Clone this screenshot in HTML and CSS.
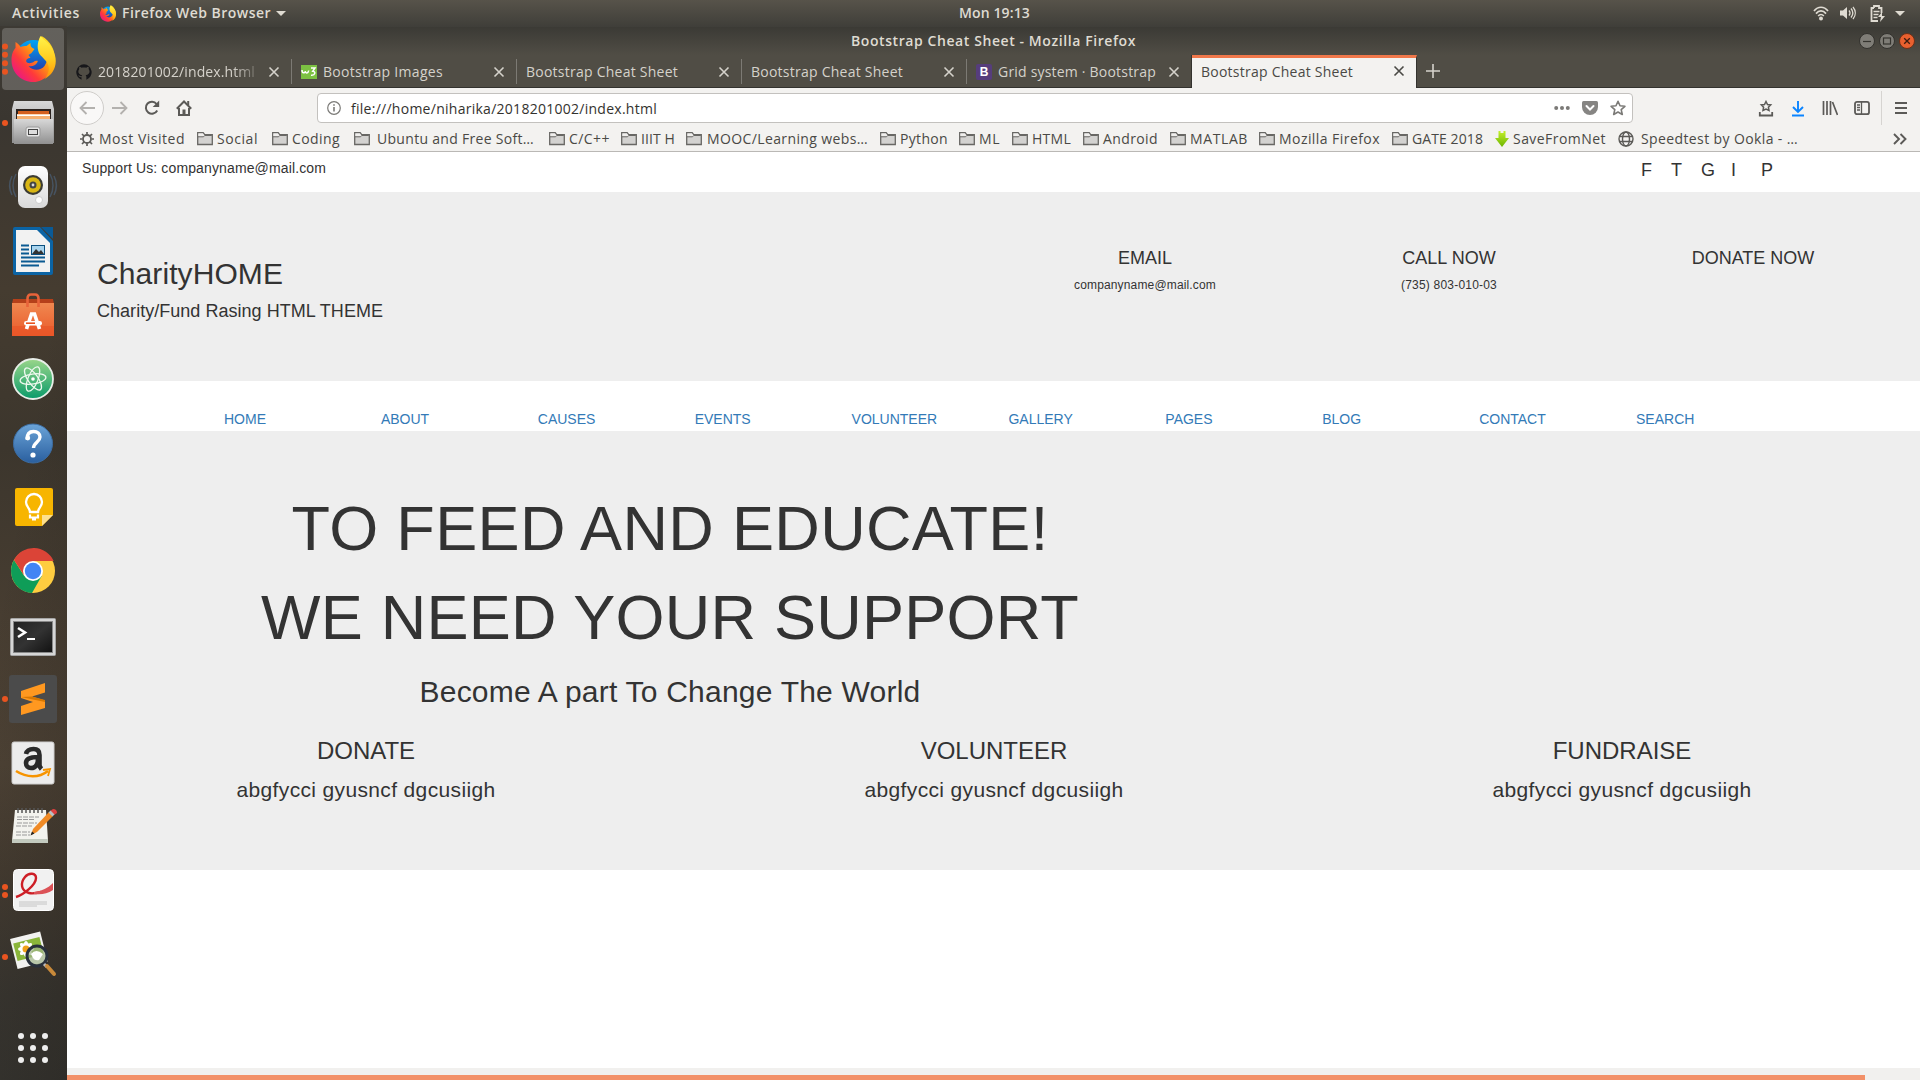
FILE: index.html
```html
<!DOCTYPE html>
<html lang="en">
<head>
<meta charset="utf-8">
<title>Bootstrap Cheat Sheet</title>
<link rel="stylesheet" href="styles.css">
</head>
<body>
<svg class="defs" width="0" height="0" aria-hidden="true">
  <defs>
    <linearGradient id="fxBody" x1="0.9" y1="0.1" x2="0.1" y2="0.9"><stop offset="0" stop-color="#ffe226"/><stop offset=".4" stop-color="#ff9a10"/><stop offset=".7" stop-color="#ff3a3a"/><stop offset="1" stop-color="#e8158a"/></linearGradient>
    <linearGradient id="fxBlue" x1="0" y1="0" x2="0" y2="1"><stop offset="0" stop-color="#00a5f5"/><stop offset="1" stop-color="#2b2ca0"/></linearGradient>
    <linearGradient id="fxFlame" x1="0" y1="0" x2="0" y2="1"><stop offset="0" stop-color="#fff44a"/><stop offset=".55" stop-color="#ffcb1e"/><stop offset="1" stop-color="#ff9108"/></linearGradient>
    <linearGradient id="silver" x1="0" y1="0" x2="0" y2="1"><stop offset="0" stop-color="#d8d8d8"/><stop offset="1" stop-color="#909090"/></linearGradient>
    <linearGradient id="paper" x1="0" y1="0" x2="0" y2="1"><stop offset="0" stop-color="#fff"/><stop offset="1" stop-color="#d9d9d9"/></linearGradient>
    <linearGradient id="bag" x1="0" y1="0" x2="0" y2="1"><stop offset="0" stop-color="#f08850"/><stop offset="1" stop-color="#ea5a2a"/></linearGradient>
    <linearGradient id="green" x1="0" y1="0" x2="0" y2="1"><stop offset="0" stop-color="#9ad68a"/><stop offset="1" stop-color="#0a9b6a"/></linearGradient>
    <linearGradient id="blue" x1="0" y1="0" x2="0" y2="1"><stop offset="0" stop-color="#6ba4d8"/><stop offset="1" stop-color="#2a5f9f"/></linearGradient>
    <linearGradient id="dark" x1="0" y1="0" x2="1" y2="1"><stop offset="0" stop-color="#222"/><stop offset=".5" stop-color="#333"/><stop offset="1" stop-color="#111"/></linearGradient>
    <linearGradient id="lime" x1="0" y1="0" x2="0" y2="1"><stop offset="0" stop-color="#c4f02a"/><stop offset="1" stop-color="#6cb400"/></linearGradient>
    <symbol id="firefox" viewBox="0 0 44 46">
      <circle cx="22" cy="22" r="18" fill="url(#fxBlue)"/>
      <path d="M4 6c2 1 4 3 5 5 2-1 4-1 6-1l4-3c0 2 0 4 2 5l2 1-3 4-3 2 2 3c-3 0-5 2-4 4 2 2 5 1 7 0 3-2 5-1 4 0-2 4-6 5-9 4 4 5 12 5 16 0 4-6 3-10 0-14-6-5-5-11-3-16 9 5 14 14 13 24-1 12-10 22-21 22C9 46 0 36 0 24 0 18 2 14 4 12z" fill="url(#fxBody)"/>
      <path d="M29 0c3 4 9 7 12 13 7 13 2 25-8 30 4-5 5-9 4-13-1-5-6-8-9-12-3-6-2-12 1-18z" fill="url(#fxFlame)"/>
    </symbol>
    <symbol id="x" viewBox="0 0 12 12"><path d="M1.500 1.500l9 9M10.500 1.500l-9 9" stroke="currentColor" stroke-width="1.600" fill="none"/></symbol>
    <symbol id="folder" viewBox="0 0 16 16"><path d="M.7 13.500V1.700h5.500l1.500 2h7.600v9.800z" fill="#d3d2d0" stroke="#686764" stroke-width="1.300"/><path d="M1.400 2.400h4.500l1.400 2-1 .9H1.400z" fill="#f0efed"/><path d="M1 5.800h5.500l1.300-1.300h7" fill="none" stroke="#686764"/></symbol>
    <symbol id="star" viewBox="0 0 16 16"><path d="M8 1.300l2 4.500 4.900.5-3.700 3.300 1.100 4.900L8 12l-4.300 2.500 1.100-4.900L1.100 6.300 6 5.800z" fill="none" stroke="currentColor" stroke-width="1.600" stroke-linejoin="round"/></symbol>
  </defs>
</svg>

<header class="panel">
  <span class="p-act" data-w="68">Activities</span>
  <svg class="p-fx" width="16" height="17"><use href="#firefox"/></svg>
  <span class="p-app" data-w="149">Firefox Web Browser</span>
  <i class="caret"></i>
  <span class="p-clock" data-w="71">Mon 19:13</span>
  <div class="p-tray">
    <svg width="16" height="16" viewBox="0 0 16 16"><g fill="none" stroke="#dfdbd2" stroke-width="1.700"><path d="M1 6c4-5 10-5 14 0M3 8.600c3-3.600 7-3.600 10 0M5.200 11c1.700-2 3.900-2 5.600 0"/></g><circle cx="8" cy="13.500" r="2" fill="#dfdbd2"/></svg>
    <svg width="16" height="16" viewBox="0 0 16 16"><path d="M0 5.500h3L7 2v12L3 10.500H0z" fill="#dfdbd2"/><path d="M9 5.500c1.200 1.500 1.200 3.500 0 5M11 3.500c2.200 2.700 2.200 6.300 0 9M13 2c3 3.600 3 8.400 0 12" fill="none" stroke="#dfdbd2" stroke-width="1.300"/></svg>
    <svg width="16" height="17" viewBox="0 0 16 17"><path d="M4 3V1h5v2h2.500v5M8 16H1.500V3H4" fill="none" stroke="#dfdbd2" stroke-width="1.800"/><path d="M3.500 6.500h6M3.500 9.500h5M3.500 12.500h4" stroke="#dfdbd2" stroke-width="1.500"/><path d="M12 7l-4 5h3l-1 5 5-6h-3z" fill="#dfdbd2"/></svg>
    <i class="caret"></i>
  </div>
</header>

<div class="desktop">
<nav class="dock">
  <div class="app current"><svg width="67" height="64" viewBox="0 0 67 64">
    <rect x="2" y="2" width="62" height="62" rx="4" fill="#fff" opacity=".2"/>
    <use href="#firefox" x="11" y="10" width="45" height="46"/>
    <g fill="#e95420"><circle cx="5" cy="20.500" r="3"/><circle cx="5" cy="28.700" r="3"/><circle cx="5" cy="37.200" r="3"/><circle cx="5" cy="45.700" r="3"/></g></svg></div>
  <div class="app"><svg width="67" height="64" viewBox="0 0 67 64">
    <path d="M14 11h38l2 8v34H12V19z" fill="url(#silver)"/><path d="M16 19h35v11H16z" fill="#2b2320"/><path d="M18 21h31v10H18z" fill="#d4601e"/><path d="M17 24h33v6H17z" fill="#f5b070"/><path d="M17 24.500h33v1.500H17z" fill="#fff"/>
    <path d="M14 29h39v25H14z" fill="url(#silver)"/><rect x="26" y="37" width="14" height="10" rx="2" fill="#e6e6e6" stroke="#999"/><rect x="28.500" y="39.500" width="9" height="5" fill="#ddd" stroke="#444"/><circle cx="5" cy="33" r="3" fill="#e95420"/></svg></div>
  <div class="app"><svg width="67" height="64" viewBox="0 0 67 64">
    <g fill="none" stroke="#4c6682" stroke-width="1.500" opacity=".6"><path d="M16 20c-4 7-4 16 0 23M12 22c-3 6-3 13 0 19M50 20c4 7 4 16 0 23M54 22c3 6 3 13 0 19"/></g>
    <rect x="18" y="12" width="30" height="42" rx="7" fill="url(#paper)"/><circle cx="33" cy="31" r="10" fill="#3b3b33"/><circle cx="33" cy="31" r="7.800" fill="#d9b614"/><circle cx="33" cy="31" r="3.500" fill="#444"/><circle cx="33" cy="31" r="1.400" fill="#ddd"/><circle cx="39" cy="46" r="3.500" fill="#fff" stroke="#ccc"/></svg></div>
  <div class="app"><svg width="67" height="64" viewBox="0 0 67 64">
    <path d="M13 11q0-2 2-2h25l13 14v32q0 2-2 2H15q-2 0-2-2z" fill="#0b64a5"/><path d="M16 12h21l13 13v29H16z" fill="#f2f2f2"/><path d="M41 9h12v12z" fill="#0a5a96"/>
    <path d="M21 27.500h8M21 31.500h8M21 35.500h8M21 39.500h24M21 43.500h24M21 47.500h18" stroke="#0b5a92" stroke-width="2"/><rect x="31.500" y="27.500" width="13" height="9" fill="#a9d4ee" stroke="#0b4f7f"/><path d="M32 36l4-5 3 3 2-2 3 4z" fill="#333"/></svg></div>
  <div class="app"><svg width="67" height="64" viewBox="0 0 67 64">
    <path d="M13 17h40l1 5H12z" fill="#b5401a"/><path d="M12 21h42v33H12z" fill="url(#bag)"/><path d="M12 44h42v10H12z" fill="#ea5426" opacity=".6"/><path d="M27.500 25v-8q0-4.500 3.500-4.500h4q3.500 0 3.500 4.500v8" fill="none" stroke="#e8633a" stroke-width="2.600"/>
    <path d="M26.500 47l5-15h3l5 15" fill="none" stroke="#fff" stroke-width="3.600"/><rect x="24" y="39" width="18" height="4.500" rx="2.200" fill="#fff"/><path d="M26 41.200h9" stroke="#e95420" stroke-width="1.600"/></svg></div>
  <div class="app"><svg width="67" height="64" viewBox="0 0 67 64">
    <circle cx="33" cy="33" r="20" fill="url(#green)" stroke="#e8eee8" stroke-width="1.800"/><g fill="none" stroke="#eef8ee" stroke-width="1.300"><ellipse cx="33" cy="33" rx="13" ry="5" transform="rotate(-8 33 33)"/><ellipse cx="33" cy="33" rx="13" ry="5" transform="rotate(55 33 33)"/><ellipse cx="33" cy="33" rx="13" ry="5" transform="rotate(112 33 33)"/></g><circle cx="33" cy="33" r="1.800" fill="#fff"/></svg></div>
  <div class="app"><svg width="67" height="64" viewBox="0 0 67 64">
    <circle cx="33" cy="33.500" r="19.500" fill="url(#blue)" stroke="#3c6ea5"/><path d="M27 29.500c0-6 3-8 6.500-8 4 0 6.500 2.300 6.500 5.500 0 5-6.500 5.500-6.500 11" fill="none" stroke="#fff" stroke-width="3.400"/><circle cx="27.800" cy="28" r="2.400" fill="#fff"/><circle cx="33" cy="45" r="2.600" fill="#fff"/></svg></div>
  <div class="app"><svg width="67" height="64" viewBox="0 0 67 64">
    <path d="M15 16q0-2 2-2h34q2 0 2 2v25L42 52H17q-2 0-2-2z" fill="#f7b500"/><path d="M53 41L42 52V41z" fill="#fde08e"/><path d="M30 38c0-4-4-5-4-10a8 8 0 0 1 16 0c0 5-4 6-4 10z" fill="none" stroke="#fff" stroke-width="2.300"/><path d="M30 40.500v3h8v-3M32 45.500h4" fill="none" stroke="#fff" stroke-width="2.200"/></svg></div>
  <div class="app"><svg width="67" height="64" viewBox="0 0 67 64">
    <circle cx="33" cy="33" r="22" fill="#ffcd40"/><path d="M14 22A22 22 0 0 0 32 55l9.700-17L33 33l-8.700 5z" fill="#0f9d58"/><path d="M14 22A22 22 0 0 1 53.700 23H33l-8.600 15z" fill="#db4437"/><circle cx="33" cy="33" r="10" fill="#fff"/><circle cx="33" cy="33" r="8.200" fill="#4285f4"/></svg></div>
  <div class="app"><svg width="67" height="64" viewBox="0 0 67 64">
    <rect x="10.500" y="16.500" width="45" height="37" rx="1" fill="#d6d6d6" stroke="#a5a5a5"/><rect x="13.500" y="19.500" width="39" height="31" fill="url(#dark)" stroke="#888"/><path d="M18 26l7 4.500-7 4.500" fill="none" stroke="#fff" stroke-width="2.600"/><path d="M27 37h8" stroke="#fff" stroke-width="2"/></svg></div>
  <div class="app"><svg width="67" height="64" viewBox="0 0 67 64">
    <rect x="9" y="9" width="48" height="48" rx="3" fill="#4b4b4b"/><path d="M21 25l24-8v9.500l-13 4 13 4V42l-24 7v-9l12-4-12-4z" fill="#ff9820"/><path d="M21 31l24 5v-2l-13-3.500z" fill="#d97800"/><circle cx="5" cy="33" r="3" fill="#e95420"/></svg></div>
  <div class="app"><svg width="67" height="64" viewBox="0 0 67 64">
    <rect x="12" y="12" width="42" height="42" rx="2" fill="#ececec" stroke="#cfcfcf"/><path d="M26 24c1-4 4-5 7.500-5 4 0 6 2 6 6v10q0 2 2 4M38 27c-6 0-12 1-12 6 0 3 2 5 5 5 5 0 7-4 7-9" fill="none" stroke="#2a2a2a" stroke-width="4.600"/><path d="M16 41c11 7 23 7 32 0" fill="none" stroke="#f79400" stroke-width="2.600"/><path d="M43 40l7-1-2 7" fill="none" stroke="#f79400" stroke-width="1.800"/></svg></div>
  <div class="app"><svg width="67" height="64" viewBox="0 0 67 64">
    <g transform="translate(0 5)"><path d="M15 11h31l2 31H12z" fill="#f3f3ee"/><path d="M12 40h36v4H12z" fill="#c3cabf"/><g fill="none" stroke="#555" stroke-width="1.500"><path d="M18 9v5M22 9v5M26 9v5M30 9v5M34 9v5M38 9v5M42 9v5"/></g><g stroke="#999" stroke-width="1" stroke-dasharray="5 1"><path d="M17 18h22M17 20.500h18M17 24h20M16 27h16M16 33h14M16 36h14"/></g><path d="M31 36l2-6 16-17 4 4-16 16z" fill="#f08a24"/><path d="M50 12l4 4 3-2q0-4-4-4z" fill="#dd4040"/><path d="M48.500 13.500l4 4 2-2-4-4z" fill="#b8c0c4"/><path d="M30.500 36.500l1.500-4 2.500 2z" fill="#222"/></g></svg></div>
  <div class="app"><svg width="67" height="64" viewBox="0 0 67 64">
    <rect x="13.500" y="11.500" width="40" height="41" rx="4" fill="#f1f1f1" stroke="#fff"/><path d="M16 39c7-2 20-12 20-19 0-5-7-6-11-1-5 6-4 14 4 16 4 1 8 0 12-1" fill="none" stroke="#cd1e26" stroke-width="2.400"/><path d="M34 34c8-1 14-4 19-9v7c-6 4-12 5-19 4z" fill="#dc5257"/><path d="M19 44h28M19 46h28M19 48h18" stroke="#c4c4c4"/><circle cx="5" cy="29" r="3" fill="#e95420"/><circle cx="5" cy="37" r="3" fill="#e95420"/></svg></div>
  <div class="app"><svg width="67" height="64" viewBox="0 0 67 64">
    <g transform="rotate(-14 28 27)"><rect x="13" y="13" width="31" height="31" fill="#f2f2f0"/><rect x="15" y="18" width="27" height="18" fill="#8ab53a"/></g><g fill="#fff"><ellipse cx="26" cy="27" rx="8" ry="3"/><ellipse cx="26" cy="27" rx="3" ry="8"/><ellipse cx="26" cy="27" rx="3" ry="8" transform="rotate(45 26 27)"/><ellipse cx="26" cy="27" rx="3" ry="8" transform="rotate(-45 26 27)"/></g><circle cx="26" cy="27" r="3.500" fill="#f0a018"/>
    <circle cx="37" cy="34" r="10" fill="#a0b48a" fill-opacity=".7" stroke="#28303c" stroke-width="3"/><path d="M31 32q5-6 12 0l-4 6q-4 1-6-2z" fill="#fff"/><path d="M44 42l3 3" stroke="#bbb" stroke-width="3"/><path d="M47 44l7 8" stroke="#c98a3a" stroke-width="4" stroke-linecap="round"/><circle cx="5" cy="35" r="3" fill="#e95420"/></svg></div>
  <div class="app all"><svg width="67" height="64" viewBox="0 0 67 64"><g fill="#eee"><circle cx="21" cy="20" r="3"/><circle cx="33" cy="20" r="3"/><circle cx="45" cy="20" r="3"/><circle cx="21" cy="32" r="3"/><circle cx="33" cy="32" r="3"/><circle cx="45" cy="32" r="3"/><circle cx="21" cy="44" r="3"/><circle cx="33" cy="44" r="3"/><circle cx="45" cy="44" r="3"/></g></svg></div>
</nav>

<main class="window">
  <div class="titlebar">
    <span data-w="285">Bootstrap Cheat Sheet - Mozilla Firefox</span>
    <div class="winbtns">
      <svg width="16" height="16" viewBox="0 0 16 16"><circle cx="8" cy="8" r="7.500" fill="#7f7d77" stroke="#33322e"/><path d="M4 8.500h8" stroke="#35342f" stroke-width="1.200"/></svg>
      <svg width="16" height="16" viewBox="0 0 16 16"><circle cx="8" cy="8" r="7.500" fill="#7f7d77" stroke="#33322e"/><rect x="4.500" y="5" width="7" height="6" fill="none" stroke="#35342f" stroke-width="1.200"/></svg>
      <svg width="16" height="16" viewBox="0 0 16 16"><circle cx="8" cy="8" r="7.500" fill="#e9602f" stroke="#6b3019"/><path d="M5.200 5.200l5.600 5.600M10.800 5.200l-5.600 5.600" stroke="#3c1c10" stroke-width="1.300"/></svg>
    </div>
  </div>
  <div class="tabs">
    <div class="tab first"><svg width="16" height="16" viewBox="0 0 16 16"><path d="M8 .3a8 8 0 0 0-2.500 15.500v-2.600c-2 .4-2.700-.8-3.200-1.900 1.500.1 1.600 1.200 3.300.9.100-.5.300-.8.600-1-4.300-.6-4.600-4.400-2.900-6.200-.2-.7-.2-1.500.1-2.200.8 0 1.500.4 2.100.9 1.600-.4 3.200-.4 4.800 0 .7-.5 1.400-.9 2.200-.9.300.7.300 1.500.1 2.200 1.700 1.900 1.300 5.600-3 6.200.7.500.8 1.300.8 2v2.600A8 8 0 0 0 8 .3z" fill="#17171a"/></svg><span class="fade"><b data-w="157">2018201002/index.html</b></span><svg class="close" width="12" height="12"><use href="#x"/></svg></div>
    <div class="tab"><svg width="16" height="14" viewBox="0 0 16 14"><rect width="16" height="14" fill="#7cc142"/><path d="M1 5c0 3.500 3 3.500 3.200 1.200.3 2.500 3 2.300 3.500-.7M10 3h4l-2.200 3.200c3 0 2.800 4.500-1.800 4" fill="none" stroke="#fff" stroke-width="1.500"/></svg><span data-w="120">Bootstrap Images</span><svg class="close" width="12" height="12"><use href="#x"/></svg></div>
    <div class="tab"><span data-w="152">Bootstrap Cheat Sheet</span><svg class="close" width="12" height="12"><use href="#x"/></svg></div>
    <div class="tab"><span data-w="152">Bootstrap Cheat Sheet</span><svg class="close" width="12" height="12"><use href="#x"/></svg></div>
    <div class="tab last"><em class="bs">B</em><span data-w="158">Grid system · Bootstrap</span><svg class="close" width="12" height="12"><use href="#x"/></svg></div>
    <div class="tab active"><span data-w="152">Bootstrap Cheat Sheet</span><svg class="close" width="12" height="12"><use href="#x"/></svg></div>
    <svg class="plus" width="14" height="14" viewBox="0 0 14 14"><path d="M7 0v14M0 7h14" stroke="#d5d2cb" stroke-width="1.600"/></svg>
  </div>
  <div class="toolbar">
    <div class="back"><svg width="16" height="14" viewBox="0 0 16 14"><path d="M16 7H1.500M7.500 1L1.500 7l6 6" fill="none" stroke="#b3b1ae" stroke-width="1.800"/></svg></div>
    <svg class="fwd" width="16" height="14" viewBox="0 0 16 14"><path d="M0 7h14.500M8.500 1l6 6-6 6" fill="none" stroke="#b3b1ae" stroke-width="1.800"/></svg>
    <svg class="reload" width="16" height="16" viewBox="0 0 16 16"><path d="M13.200 10.500A6 6 0 1 1 12.600 4" fill="none" stroke="#5b5a57" stroke-width="2"/><path d="M15.200.5v6.500H8.700z" fill="#5b5a57"/></svg>
    <svg class="home" width="16" height="16" viewBox="0 0 16 16"><path d="M.8 8.700L8 1.500l7.200 7.200M3 8v7h10V8" fill="none" stroke="#5b5a57" stroke-width="2"/><path d="M6.500 15V9.500h3V15z" fill="#5b5a57"/><path d="M11.200 1h2v4h-2z" fill="#5b5a57"/></svg>
    <div class="url">
      <svg width="14" height="14" viewBox="0 0 14 14"><circle cx="7" cy="7" r="6.300" fill="none" stroke="#7b7a77" stroke-width="1.200"/><path d="M7 6v4.500M7 3.300v1.500" stroke="#7b7a77" stroke-width="1.600"/></svg>
      <span data-w="306">file:///home/niharika/2018201002/index.html</span>
      <div class="url-icons">
        <svg width="16" height="16" viewBox="0 0 16 16"><g fill="#7b7a77"><circle cx="2.200" cy="8" r="2"/><circle cx="8" cy="8" r="2"/><circle cx="13.800" cy="8" r="2"/></g></svg>
        <svg width="16" height="16" viewBox="0 0 16 16"><path d="M1.500 1h13Q16 1 16 2.500V7a8 8 0 0 1-16 0V2.500Q0 1 1.500 1z" fill="#868583"/><path d="M4.500 6L8 9.500 11.500 6" fill="none" stroke="#fff" stroke-width="2" stroke-linecap="round"/></svg>
        <svg width="16" height="16"><use href="#star"/></svg>
      </div>
    </div>
    <div class="tools">
      <svg width="16" height="17" viewBox="0 0 16 17"><path d="M8 1.500l1.500 3 3.200.4-2.300 2.300.6 3.300L8 9l-3 1.500.6-3.300-2.300-2.300 3.200-.4z" fill="none" stroke="#5b5a57" stroke-width="1.500"/><path d="M1.800 12v3.500h12.400V12" fill="none" stroke="#5b5a57" stroke-width="1.800"/></svg>
      <svg width="16" height="17" viewBox="0 0 16 17"><path d="M8 1v11M3 7l5 5 5-5M2 15.500h12" fill="none" stroke="#0a84ff" stroke-width="1.900"/></svg>
      <svg width="16" height="16" viewBox="0 0 16 16"><path d="M1.500 1v14M5 1v14M8.500 1v14M10.500 2l5 13" stroke="#5b5a57" stroke-width="1.700"/></svg>
      <svg width="16" height="16" viewBox="0 0 16 16"><rect x="1" y="1.800" width="14" height="12.400" rx="2" fill="none" stroke="#5b5a57" stroke-width="1.800"/><path d="M7.500 2v12M3 5h3M3 7.500h3M3 10h3" stroke="#5b5a57" stroke-width="1.300"/></svg>
    </div>
    <svg class="menu" width="12" height="12" viewBox="0 0 12 12"><path d="M0 1h12M0 6h12M0 11h12" stroke="#5b5a57" stroke-width="1.900"/></svg>
  </div>
  <div class="bookmarks">
    <div><svg width="14" height="14" viewBox="0 0 14 14"><circle cx="7" cy="7" r="4" fill="none" stroke="#5b5a57" stroke-width="1.800"/><path d="M7 0v2.500M7 11.500V14M0 7h2.500M11.500 7H14M2 2l2 2M10 10l2 2M2 12l2-2M10 4l2-2" stroke="#5b5a57" stroke-width="1.700"/></svg><span data-w="86">Most Visited</span></div>
    <div><svg width="16" height="16"><use href="#folder"/></svg><span data-w="41">Social</span></div>
    <div><svg width="16" height="16"><use href="#folder"/></svg><span data-w="48">Coding</span></div>
    <div class="wide"><svg width="16" height="16"><use href="#folder"/></svg><span data-w="157">Ubuntu and Free Soft…</span></div>
    <div><svg width="16" height="16"><use href="#folder"/></svg><span data-w="41">C/C++</span></div>
    <div><svg width="16" height="16"><use href="#folder"/></svg><span data-w="34">IIIT H</span></div>
    <div class="mid"><svg width="16" height="16"><use href="#folder"/></svg><span data-w="161">MOOC/Learning webs…</span></div>
    <div><svg width="16" height="16"><use href="#folder"/></svg><span data-w="48">Python</span></div>
    <div><svg width="16" height="16"><use href="#folder"/></svg><span data-w="21">ML</span></div>
    <div><svg width="16" height="16"><use href="#folder"/></svg><span data-w="39">HTML</span></div>
    <div><svg width="16" height="16"><use href="#folder"/></svg><span data-w="55">Android</span></div>
    <div><svg width="16" height="16"><use href="#folder"/></svg><span data-w="58">MATLAB</span></div>
    <div><svg width="16" height="16"><use href="#folder"/></svg><span data-w="101">Mozilla Firefox</span></div>
    <div><svg width="16" height="16"><use href="#folder"/></svg><span data-w="71">GATE 2018</span></div>
    <div><svg width="14" height="16" viewBox="0 0 14 16"><path d="M3.500 0h2v2h3V0h2v7H14l-7 9-7-9h3.500z" fill="url(#lime)"/></svg><span data-w="93">SaveFromNet</span></div>
    <div class="wide"><svg width="16" height="16" viewBox="0 0 16 16"><g fill="none" stroke="#5b5a57" stroke-width="1.400"><circle cx="8" cy="8" r="7"/><ellipse cx="8" cy="8" rx="3.500" ry="7"/><path d="M1.500 5.500h13M1.500 10.500h13"/></g></svg><span data-w="157">Speedtest by Ookla - …</span></div>
    <div><svg width="14" height="12" viewBox="0 0 14 12"><path d="M1 1l5 5-5 5M7.500 1l5 5-5 5" fill="none" stroke="#5b5a57" stroke-width="1.900"/></svg></div>
  </div>

  <div class="page">
    <div class="support"><p><span data-w="244">Support Us: companyname@mail.com</span></p><div class="social"><span>F</span><span>T</span><span>G</span><span>I</span><span>P</span></div></div>
    <section class="brand">
      <div class="brand-name"><h2><span data-w="186">CharityHOME</span></h2><h4><span data-w="286">Charity/Fund Rasing HTML THEME</span></h4></div>
      <div class="contact"><h4>EMAIL</h4><h6><span data-w="142">companyname@mail.com</span></h6></div>
      <div class="contact"><h4>CALL NOW</h4><h6><span data-w="96">(735) 803-010-03</span></h6></div>
      <div class="contact"><h4>DONATE NOW</h4></div>
    </section>
    <nav class="menu-row"><a>HOME</a><a>ABOUT</a><a>CAUSES</a><a>EVENTS</a><a>VOLUNTEER</a><a>GALLERY</a><a>PAGES</a><a>BLOG</a><a>CONTACT</a><a>SEARCH</a></nav>
    <section class="jumbo">
      <div class="headline"><h1 data-w="757">TO FEED AND EDUCATE!</h1><h1 data-w="818">WE NEED YOUR SUPPORT</h1><h2 data-w="501">Become A part To Change The World</h2></div>
      <div class="cols">
        <div><h3>DONATE</h3><p data-w="259">abgfycci gyusncf dgcusiigh</p></div>
        <div><h3>VOLUNTEER</h3><p data-w="259">abgfycci gyusncf dgcusiigh</p></div>
        <div><h3>FUNDRAISE</h3><p data-w="259">abgfycci gyusncf dgcusiigh</p></div>
      </div>
    </section>
  </div>
  <div class="hscroll"><i></i></div>
</main>
</div>
<script src="fit.js"></script>
</body>
</html>
```
FILE: fit.js
```js
// Track each label so that its text fills the width given in data-w.
document.querySelectorAll('[data-w]').forEach(function (el) {
  var range = document.createRange();
  range.selectNodeContents(el);
  var natural = range.getBoundingClientRect().width;
  var gap = (Number(el.dataset.w) - natural) / el.textContent.length;
  el.style.letterSpacing = gap.toFixed(3) + 'px';
});
```
FILE: styles.css
```css
* { box-sizing: border-box; }
body { margin: 0; width: 1920px; height: 1080px; overflow: hidden; font-family: "Open Sans", "Noto Sans", sans-serif; font-size: 14px; color: #3c3b37; background: #3b3833; }
svg { display: block; flex: none; }
.defs { position: absolute; }
h1, h2, h3, h4, h6, p { margin: 0; font-weight: 400; }
span, a { white-space: nowrap; }

.panel { height: 27px; display: flex; align-items: center; background: linear-gradient(#57534a, #3f3e39); color: #dfdbd2; font-weight: 600; padding: 0 0 1px 12px; line-height: 26px; }
.p-act { width: 88px; }
.p-fx { margin-right: 6px; }
.p-app { width: 154px; }
.caret { width: 0; height: 0; border: 5px solid transparent; border-top-color: #dfdbd2; border-bottom: 0; }
.p-clock { margin-left: 673px; }
.p-tray { margin-left: auto; display: flex; align-items: center; gap: 11px; padding-right: 15px; }
.p-tray svg:nth-child(3) { margin: 0 -2px 0 3px; }

.desktop { display: flex; height: 1053px; }
.dock { width: 67px; display: flex; flex-direction: column; margin-top: -1px; flex: none; background: linear-gradient(100deg, rgba(20,18,16,0) 40%, rgba(20,18,16,.25)), linear-gradient(#3d3a34 0, #3a3630 9%, #453c30 25%, #3c362d 40%, #473d31 56%, #4d4235 70%, #453c31 80%, #3a3731 92%, #383631); }
.app { height: 64px; }
.all { margin-top: auto; }

.window { flex: 1; display: flex; flex-direction: column; min-width: 0; }
.titlebar { height: 28px; display: flex; align-items: center; background: linear-gradient(#3b3a35, #504d45); color: #dfdbd2; font-weight: 600; padding-left: 784px; line-height: 27px; }
.titlebar > span { padding-bottom: 1px; line-height: 26px; }
.winbtns { margin-left: auto; display: flex; gap: 4px; padding-right: 5px; }
.tabs { height: 33px; display: flex; background: #504d45; border-bottom: 1px solid #33322e; color: #d5d2cb; }
.tab { width: 225px; display: flex; align-items: center; padding: 1px 11px 0 9px; gap: 6px; border-right: 1px solid transparent; border-image: linear-gradient(transparent 5px, #7c7a74 5px, #7c7a74 28px, transparent 28px) 1; }
.last { border-image: none; border-right: 1px solid #33322e; }
.close { margin-left: auto; }
.fade { width: 165px; margin-right: -8px; -webkit-mask-image: linear-gradient(90deg, #000 135px, transparent 165px); mask-image: linear-gradient(90deg, #000 135px, transparent 165px); }
.fade b { font-weight: 400; }
.bs { width: 16px; height: 16px; background: #563d7c; color: #fff; font: 700 12px/16px "Liberation Sans", sans-serif; text-align: center; border-radius: 2px; }
.active { height: 33px; background: #f3f2f0; color: #4a4945; border-image: none; border-right: 1px solid #33322e; border-top: 3px solid #f0774a; padding-top: 0; padding-bottom: 4px; }
.plus { margin: 9px 0 0 9px; }

.toolbar { height: 40px; background: #f3f2f0; display: flex; align-items: center; padding-left: 3px; }
.back { width: 34px; height: 34px; border: 1px solid #cfcdca; border-radius: 50%; background: #f9f8f7; display: flex; align-items: center; justify-content: center; }
.fwd { margin-left: 8px; }
.reload { margin-left: 16px; }
.home { margin-left: 16px; }
.url { margin-left: 125px; width: 1316px; height: 30px; background: #fff; border: 1px solid #c3c1be; border-radius: 4px; display: flex; align-items: center; padding: 0 6px 0 9px; }
.url > span { margin-left: 10px; color: #33322e; }
.url-icons { margin-left: auto; display: flex; gap: 12px; color: #7b7a77; }
.tools { margin-left: 125px; display: flex; gap: 16px; }
.menu { margin-left: 11px; box-sizing: content-box; padding: 11px 0 11px 13px; border-left: 1px solid #d6d4d1; }

.bookmarks { height: 24px; background: #f3f2f0; border-bottom: 1px solid #bab8b5; display: grid; grid-template-columns: 117px 75px 82px 195px 72px 65px 194px 79px 53px 71px 87px 89px 133px 103px 123px 275px 26px; padding: 0 0 1px 13px; color: #4a4945; }
.bookmarks div { display: flex; align-items: center; gap: 4px; }
.bookmarks span { line-height: 20px; padding-bottom: 1px; }
.bookmarks .wide { gap: 7px; }
.bookmarks .mid { gap: 5px; }
.bookmarks div:first-child { gap: 5px; }

.page { flex: 1; background: #fff; color: #333; font: 14px/20px "Liberation Sans", Arial, sans-serif; overflow: hidden; }
.support { height: 40px; display: flex; padding: 6px 0 0 15px; }
.support p { width: 1559px; }
.social { display: grid; grid-template-columns: 30px 30px 30px 30px 30px; font-size: 18px; padding-top: 2px; line-height: 20px; }
.brand { height: 189px; background: #eee; display: grid; grid-template-columns: 896px 304px 304px 304px; padding: 57px 0 0 30px; }
.brand h4 { font-size: 18px; line-height: 19.8px; }
.brand h2 { font-size: 30px; line-height: 33px; margin: 8px 0 12px; }
.brand h6 { font-size: 12px; line-height: 13.2px; margin-top: 10px; }
.contact { text-align: center; }
.menu-row { height: 50px; display: grid; grid-template-columns: repeat(10, 156.9px); padding: 28px 0 0 157px; color: #337ab7; }
.jumbo { height: 439px; background: #eee; padding-top: 63px; overflow: hidden; }
.headline { width: 1206px; text-align: center; }
.headline h1 { font-size: 63px; line-height: 69.3px; margin-bottom: 20px; }
.headline h2 { font-size: 30px; line-height: 33px; margin-top: 22px; }
.cols { display: grid; grid-template-columns: repeat(3, 628px); margin: 30px 0 0 -15px; text-align: center; }
.cols h3 { font-size: 24px; line-height: 26.4px; margin-bottom: 11px; }
.cols p { font-size: 21px; line-height: 29.4px; }
.hscroll { height: 12px; background: #f1f0ee; padding-top: 7px; }
.hscroll i { display: block; width: 1798px; height: 5px; background: #f29068; }
```
